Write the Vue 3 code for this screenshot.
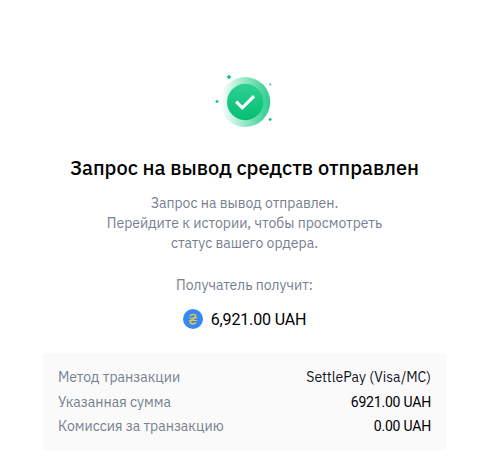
<script setup>
import {ref} from "vue";

const message = [
  "Запрос на вывод отправлен.",
  "Перейдите к истории, чтобы просмотреть",
  "статус вашего ордера.",
];

const rows = ref([
  {label: "Метод транзакции", value: "SettlePay (Visa/MC)", type: "method"},
  {label: "Указанная сумма", value: "6921.00 UAH", type: "number"},
  {label: "Комиссия за транзакцию", value: "0.00 UAH", type: "number"},
]);
</script>

<template>
  <div class="withdraw">
    <svg class="success" width="64" height="60" viewBox="0 0 64 60">
      <defs>
        <linearGradient id="ring" x1="0" y1="0" x2="1" y2="0">
          <stop offset="0" stop-color="#fff" />
          <stop offset="1" stop-color="#2bce8c" />
        </linearGradient>
        <linearGradient id="disc" x1="0" y1="0" x2="0" y2="1">
          <stop offset="0" stop-color="#2ed191" />
          <stop offset="1" stop-color="#06bd74" />
        </linearGradient>
      </defs>
      <circle cx="32.2" cy="30" r="25" fill="url(#ring)" />
      <circle cx="32.2" cy="30" r="18.2" fill="url(#disc)" />
      <path d="M23.2 29.7l6.1 6.1L41 24.1" fill="none" stroke="#fff" stroke-width="3.2" />
      <g fill="#18c487" stroke="#18c487" stroke-width="0.6">
        <path d="M16 2.9l2.1 2.1L16 7.1l-2.1-2.1z" />
        <path d="M4 27.9l1.5 1.5L4 30.9l-1.5-1.500z" />
        <path d="M57.200 11.500l0.900 0.900-0.900 0.900-0.900-0.900z" />
        <path d="M57.200 45.900l1.500 1.500-1.500 1.500-1.500-1.500z" />
      </g>
    </svg>
    <h1>Запрос на вывод средств отправлен</h1>
    <div class="message">
      <div v-for="(line, index) in message" :key="index">{{ line }}</div>
    </div>
    <div class="receive">Получатель получит:</div>
    <div class="amount">
      <svg width="20" height="20" viewBox="0 0 20 20">
        <circle cx="10" cy="10" r="10" fill="#3388fa" />
        <g fill="none" stroke="#e2c547" stroke-width="1.600">
          <path d="M7 6.800C8 5 12.900 4.900 12.800 7.400C12.700 9.700 7.200 10.300 7.200 12.900C7.300 15.600 11.800 15.300 13.100 13.600" />
          <path d="M5.900 9h8.300M5.900 11.500h8.300" stroke-width="1.200" />
        </g>
      </svg>
      <span>6,921.00 UAH</span>
    </div>
    <div class="details">
      <div class="row" v-for="row in rows" :key="row.label">
        <div class="label">{{ row.label }}</div>
        <div :class="'value ' + row.type">{{ row.value }}</div>
      </div>
    </div>
  </div>
</template>

<style>
body {
  background-color: #fff;
}
</style>

<style scoped>
.withdraw {
  box-sizing: border-box;
  width: 498px;
  height: 466px;
  padding: 72px 51px 0 42px;
  display: flex;
  flex-direction: column;
  align-items: center;
  font-family: "IBM Plex Sans", Roboto, sans-serif;
  font-size: 14px;
  color: #76808f;
}

.success {
  flex: none;
}

h1 {
  margin: 22px 0 0;
  font-size: 20px;
  font-weight: 500;
  line-height: 28px;
  white-space: nowrap;
  color: #000;
}

.message {
  margin-top: 11px;
  line-height: 20px;
  text-align: center;
  white-space: nowrap;
}

.receive {
  margin-top: 22px;
  line-height: 20px;
}

.amount {
  display: flex;
  align-items: center;
  gap: 8px;
  margin-top: 12px;
  font-family: Roboto, sans-serif;
  font-size: 16px;
  line-height: 24px;
  letter-spacing: -0.15px;
  color: #000;
}

.amount span {
  padding-top: 1px;
  margin-bottom: -1px;
}

.details {
  box-sizing: border-box;
  width: 405px;
  height: 97px;
  margin-top: 22px;
  padding: 12px 16px;
  border-radius: 4px;
  background-color: #fafafa;
}

.row {
  display: flex;
  justify-content: space-between;
  line-height: 24.5px;
}

.value {
  color: #14151a;
}

.number {
  font-family: Roboto, sans-serif;
  letter-spacing: -0.2px;
  color: #000;
}
</style>
